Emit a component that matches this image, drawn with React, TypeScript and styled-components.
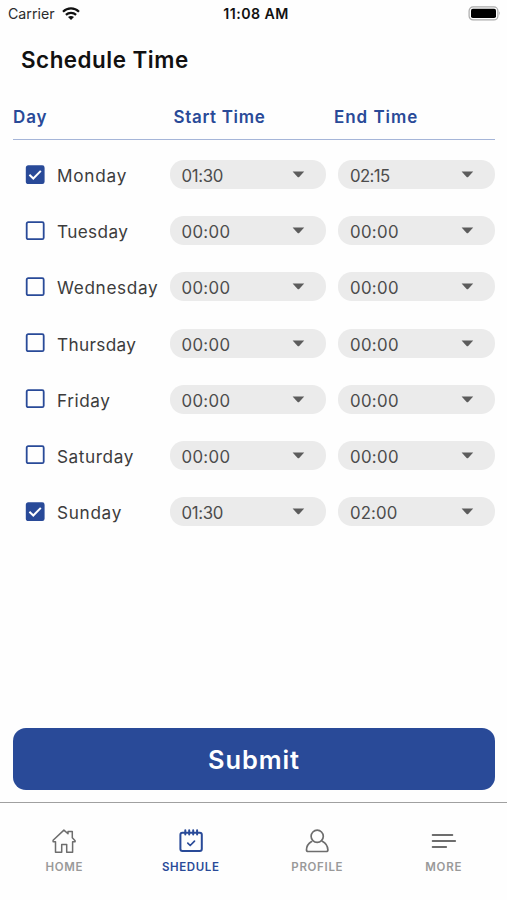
import React, { useState } from 'react';
import styled, { createGlobalStyle } from 'styled-components';

const BLUE = '#294a98';

const GlobalStyle = createGlobalStyle`
  * { box-sizing: border-box; }
  body { margin: 0; background: #fefefe; font-family: Inter, 'Open Sans', sans-serif; }
  button { font: inherit; border: 0; padding: 0; background: none; color: inherit; cursor: pointer; }
`;

const Screen = styled.div`
  width: 507px;
  height: 900px;
  display: flex;
  flex-direction: column;
  overflow: hidden;
  background: #fefefe;
`;

const StatusBar = styled.header`
  height: 28px;
  padding: 0 6px 0 8px;
  display: grid;
  grid-template-columns: 1fr auto 1fr;
  align-items: center;
  color: #111;
  font-size: 14.2px;
  line-height: 28px;
`;

const Carrier = styled.div`
  display: flex;
  align-items: center;
  gap: 7px;
  color: #2b2b2b;
  letter-spacing: 0;
`;

const Clock = styled.div`
  padding-left: 3px;
  font-weight: 600;
  letter-spacing: 0.42px;
`;

const BatteryIcon = styled.svg`
  justify-self: end;
  margin-top: -2px;
`;

const Title = styled.h1`
  margin: 18px 0 0 21px;
  font-size: 22.4px;
  line-height: 27px;
  font-weight: 600;
  letter-spacing: 0.51px;
  color: #111;
`;

const TableHead = styled.div`
  margin: 31px 12px 0 13px;
  height: 36px;
  display: grid;
  grid-template-columns: 160.5px 160.5px 1fr;
  border-bottom: 1px solid #a5b5d8;
  color: ${BLUE};
  font-size: 17px;
  line-height: 27px;
  font-weight: 600;
`;

const HeadCell = styled.span<{ $track: number }>`
  letter-spacing: ${p => p.$track}px;
`;

const Days = styled.div`
  margin: 20px 12px 0 25px;
  display: flex;
  flex-direction: column;
  gap: 27.2px;
`;

const DayRow = styled.div`
  height: 29px;
  display: grid;
  grid-template-columns: 32px 112.5px 156.5px 157px;
  column-gap: 0;
  align-items: center;

  & > :last-child { margin-left: 12px; margin-right: -12px; }
`;

const CheckButton = styled.button`
  width: 20px;
  height: 20px;
  margin-top: -1px;
  display: block;
`;

const DayName = styled.span<{ $track: number }>`
  font-size: 17.2px;
  line-height: 29px;
  padding-top: 1px;
  color: #3c3c3c;
  white-space: nowrap;
  letter-spacing: ${p => p.$track}px;
`;

const TimeSelect = styled.button<{ $track: number }>`
  height: 29px;
  margin-top: -1px;
  padding: 1px 21px 0 12px;
  display: flex;
  align-items: center;
  justify-content: space-between;
  border-radius: 14px;
  background: #ebebeb;
  color: #4c4c4c;
  font-size: 16.8px;
  line-height: 28px;
  letter-spacing: ${p => p.$track}px;

  span { padding-top: 2px; }
`;

const Submit = styled.button`
  && {
    margin: auto 12px 12px 13px;
    height: 62px;
    padding-top: 1px;
    flex: none;
    border-radius: 13px;
    background: ${BLUE};
    color: #fff;
    font-size: 25.4px;
    line-height: 61px;
    font-weight: 600;
    letter-spacing: 0.95px;
  }
`;

const TabBar = styled.nav`
  height: 98px;
  flex: none;
  padding: 25px 0 0 1px;
  display: grid;
  grid-template-columns: repeat(4, 1fr);
  border-top: 1px solid #a0a0a0;
`;

const Tab = styled.button<{ $active: boolean; $track: number }>`
  height: 50px;
  display: flex;
  flex-direction: column;
  align-items: center;
  gap: 4px;
  color: ${p => (p.$active ? BLUE : '#999')};
  font-size: 11.5px;
  line-height: 18px;
  font-weight: 600;
  letter-spacing: ${p => p.$track}px;

  svg { color: ${p => (p.$active ? BLUE : '#6d6d6d')}; }
`;

const CheckMark = ({ on }: { on: boolean }) => (
  <svg width="20" height="20" viewBox="0 0 20 20" fill="none" display="block">
    <rect x="1.7" y="1.2" width="17" height="17" rx="1.5" fill={on ? BLUE : '#fefefe'} stroke={BLUE} strokeWidth="1.8" />
    {on && <path d="M4.4 9.7 8.3 13.5 15.8 5.9" stroke="#fff" strokeWidth="2" />}
  </svg>
);

const Caret = () => (
  <svg width="13" height="8" viewBox="0 0 13 8">
    <path d="M.6.5h11.6L7.2 5.9q-.8.8-1.6 0Z" fill="#5c5c5c" />
  </svg>
);

const WifiIcon = () => (
  <svg width="18" height="14" viewBox="0 0 18 14" fill="none" stroke="#111" strokeWidth="2.2">
    <path d="M1 4.7c4.5-4.3 11.5-4.3 16 0M3.9 7.9c2.9-2.7 7.3-2.7 10.2 0" />
    <path d="M6 10c1.7-1.5 4.3-1.5 6 0l-3 3Z" fill="#111" stroke="none" />
  </svg>
);

const tabIcon = { width: 26, height: 26, viewBox: '0 0 26 26', fill: 'none', stroke: 'currentColor', strokeLinejoin: 'round', strokeLinecap: 'round' } as const;

const HomeIcon = () => (
  <svg {...tabIcon} strokeWidth="1.5">
    <path d="M4.5 13.7H2.1v-1.5L12.9 2.1 17 5.8V3.4h4.3v6.3l2.8 3v1h-2.5v10.5h-5.9v-7.6h-5v7.6H4.5Z" />
  </svg>
);

const CalendarIcon = () => (
  <svg {...tabIcon} strokeWidth="2">
    <rect x="2.4" y="4.7" width="21.4" height="18.2" rx="2" />
    <path d="M7.3 2.3v4.1M11.2 2.3v4.1M15.2 2.3v4.1M19.1 2.3v4.1" />
    <path d="m9.8 15.2 2.4 2.3 4.3-4.3" strokeWidth="1.7" />
  </svg>
);

const ProfileIcon = () => (
  <svg {...tabIcon} strokeWidth="1.7">
    <circle cx="13.2" cy="8.3" r="6.1" />
    <path d="M7.6 13.6q-5 3-5.1 8.3 0 1.6 1.7 1.6h18q1.7 0 1.7-1.6-.2-5.6-5.6-8.6" />
  </svg>
);

const MoreIcon = () => (
  <svg {...tabIcon} strokeWidth="2">
    <path d="M1.7 7h19.6M1.7 13h22.4M1.7 19h13.4" />
  </svg>
);

const TIME_TRACK: Record<string, number> = { '01:30': -0.35, '00:00': 0.35, '02:15': -0.6, '02:00': 0.14 };

const DAYS = [
  { name: 'Monday', track: 0.76, on: true, start: '01:30', end: '02:15' },
  { name: 'Tuesday', track: 0.37, on: false, start: '00:00', end: '00:00' },
  { name: 'Wednesday', track: 0.66, on: false, start: '00:00', end: '00:00' },
  { name: 'Thursday', track: 0.34, on: false, start: '00:00', end: '00:00' },
  { name: 'Friday', track: 0.56, on: false, start: '00:00', end: '00:00' },
  { name: 'Saturday', track: 0.58, on: false, start: '00:00', end: '00:00' },
  { name: 'Sunday', track: 0.68, on: true, start: '01:30', end: '02:00' },
];

const TABS = [
  { label: 'HOME', track: 0.65, Icon: HomeIcon },
  { label: 'SHEDULE', track: 0.6, Icon: CalendarIcon },
  { label: 'PROFILE', track: 0.68, Icon: ProfileIcon },
  { label: 'MORE', track: 0.8, Icon: MoreIcon },
];

export default function App() {
  const [checked, setChecked] = useState(DAYS.map(d => d.on));
  const [active, setActive] = useState('SHEDULE');
  const toggle = (index: number) => setChecked(list => list.map((on, i) => (i === index ? !on : on)));

  return (
    <Screen>
      <GlobalStyle />
      <StatusBar>
        <Carrier>Carrier <WifiIcon /></Carrier>
        <Clock>11:08 AM</Clock>
        <BatteryIcon width="33" height="15" viewBox="0 0 33 15">
          <rect x="1.1" y="0.9" width="28.8" height="13" rx="4" fill="#fff" stroke="#aaa" strokeWidth="1.2" />
          <rect x="3" y="2.8" width="25" height="9.2" rx="1.8" fill="#000" />
          <path d="M31.3 5.2q1.4 2.2 0 4.4Z" fill="#888" />
        </BatteryIcon>
      </StatusBar>
      <Title>Schedule Time</Title>
      <TableHead>
        <HeadCell $track={0.9}>Day</HeadCell>
        <HeadCell $track={0.66}>Start Time</HeadCell>
        <HeadCell $track={0.96}>End Time</HeadCell>
      </TableHead>
      <Days>
        {DAYS.map((day, i) => (
          <DayRow key={day.name}>
            <CheckButton role="checkbox" aria-checked={checked[i]} aria-label={day.name} onClick={() => toggle(i)}>
              <CheckMark on={checked[i]} />
            </CheckButton>
            <DayName $track={day.track}>{day.name}</DayName>
            <TimeSelect $track={TIME_TRACK[day.start]}><span>{day.start}</span><Caret /></TimeSelect>
            <TimeSelect $track={TIME_TRACK[day.end]}><span>{day.end}</span><Caret /></TimeSelect>
          </DayRow>
        ))}
      </Days>
      <Submit>Submit</Submit>
      <TabBar>
        {TABS.map(({ label, track, Icon }) => (
          <Tab key={label} $active={active === label} $track={track} onClick={() => setActive(label)}>
            <Icon />
            {label}
          </Tab>
        ))}
      </TabBar>
    </Screen>
  );
}
